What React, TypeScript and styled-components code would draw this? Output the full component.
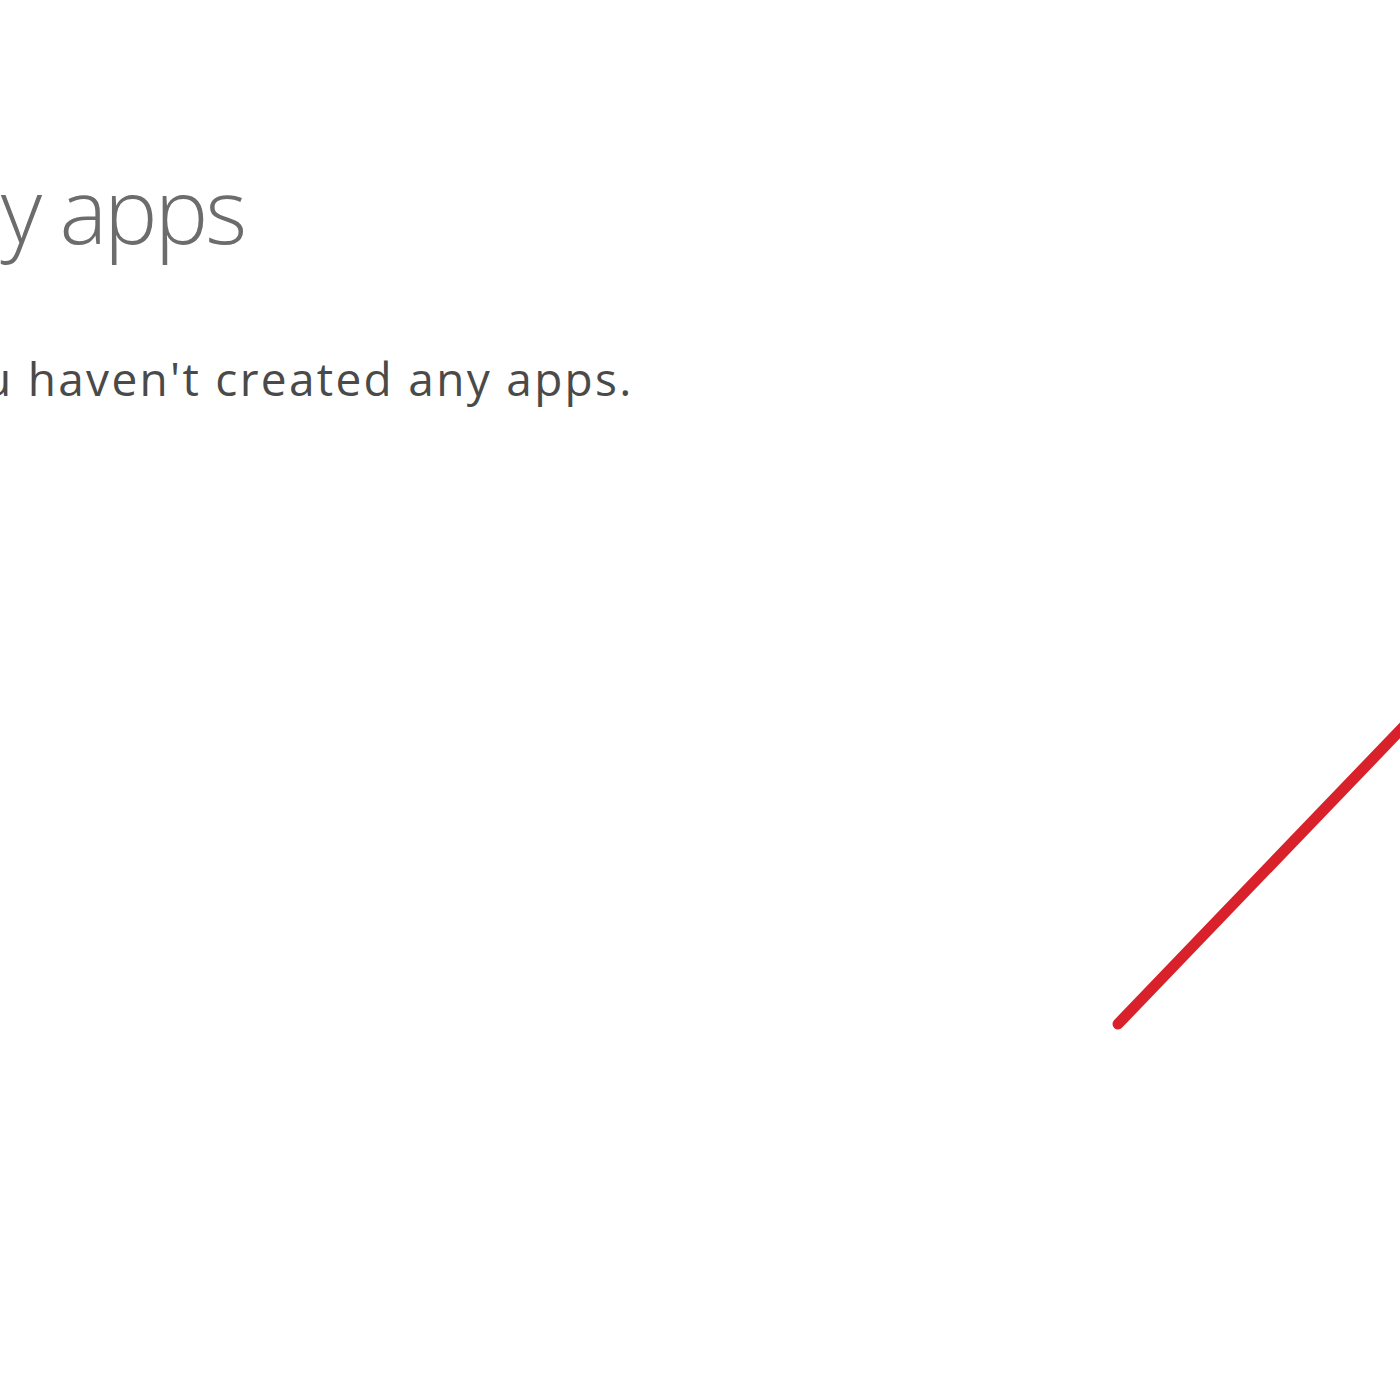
import React from "react";
import styled, { createGlobalStyle } from "styled-components";

const Global = createGlobalStyle`
  html, body { margin: 0; padding: 0; background: #ffffff; }
  body { font-family: "Open Sans", "Liberation Sans", sans-serif; }
`;

const Page = styled.div`
  position: relative;
  width: 1400px;
  height: 1400px;
  overflow: hidden;
  background: #ffffff;
`;

const Content = styled.div`
  display: flex;
  flex-direction: column;
  align-items: flex-start;
  padding-top: 149px;
`;

const Heading = styled.h1`
  margin: 0 0 0 -74px;
  font-family: "Open Sans", sans-serif;
  font-weight: 300;
  font-size: 90px;
  letter-spacing: -3px;
  line-height: 120px;
  color: #6c6c6c;
  white-space: nowrap;
`;

const Message = styled.p`
  margin: 81px 0 0 -75px;
  font-family: "Open Sans", sans-serif;
  font-weight: 400;
  font-size: 46px;
  letter-spacing: 2.3px;
  line-height: 56px;
  color: #4a4a4a;
  white-space: nowrap;
`;

const Annotation = styled.svg`
  position: absolute;
  left: 0;
  top: 0;
  pointer-events: none;
`;

export default function App() {
  return (
    <>
      <Global />
      <Page>
        <Content>
          <Heading>My apps</Heading>
          <Message>You haven't created any apps.</Message>
        </Content>
        <Annotation width="1400" height="1400" viewBox="0 0 1400 1400">
          <line x1="1118" y1="1024" x2="1410" y2="720" stroke="#d9212b" strokeWidth="11" strokeLinecap="round" />
        </Annotation>
      </Page>
    </>
  );
}
